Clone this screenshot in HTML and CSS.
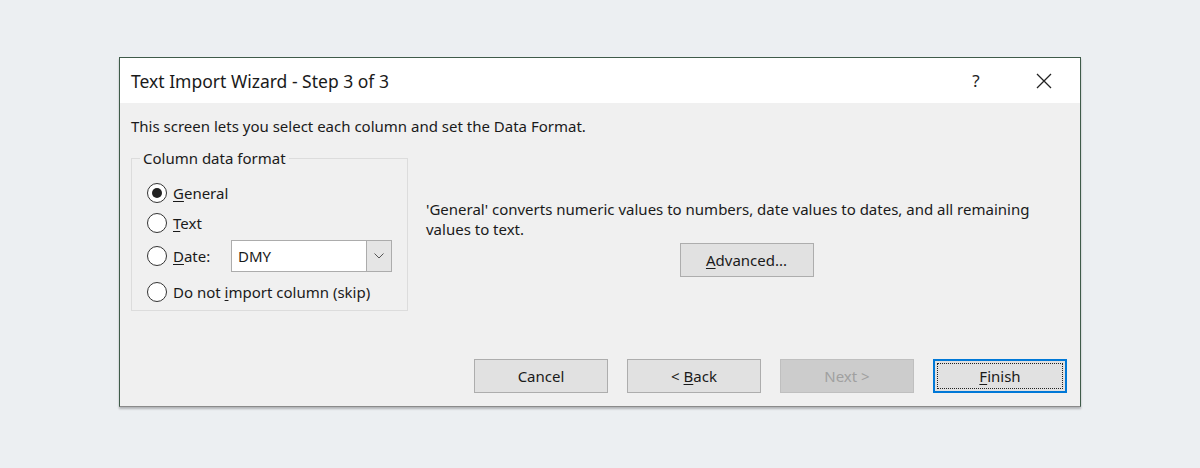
FILE: index.html
```html
<!DOCTYPE html>
<html>
<head>
<meta charset="utf-8">
<link rel="stylesheet" href="styles.css">
</head>
<body>
<div class="dialog">
  <div class="titlebar">
    <div class="title">Text Import Wizard - Step 3 of 3</div>
    <div class="tb-btn help">?</div>
    <div class="tb-btn close">
      <svg width="16" height="16" viewBox="0 0 16 16"><path d="M1 1 L15 15 M15 1 L1 15" stroke="#222" stroke-width="1.3" fill="none"/></svg>
    </div>
  </div>
  <div class="body">
    <div class="intro">This screen lets you select each column and set the Data Format.</div>
    <div class="main">
      <div class="group">
        <div class="legend">Column data format</div>
        <div class="radio-row first-row"><span class="radio checked"></span><span><u>G</u>eneral</span></div>
        <div class="radio-row"><span class="radio"></span><span><u>T</u>ext</span></div>
        <div class="radio-row date-row"><span class="radio"></span><span class="date-label"><u>D</u>ate:</span>
          <div class="select"><span class="select-val">DMY</span><span class="select-arrow"><svg width="10" height="6" viewBox="0 0 10 6"><path d="M0.5 0.5 L5 5 L9.5 0.5" stroke="#555" stroke-width="1" fill="none"/></svg></span></div>
        </div>
        <div class="radio-row last-row"><span class="radio"></span><span>Do not <u>i</u>mport column (skip)</span></div>
      </div>
      <div class="desc">
        <p>'General' converts numeric values to numbers, date values to dates, and all remaining values to text.</p>
        <div class="btn adv"><span><u>A</u>dvanced...</span></div>
      </div>
    </div>
    <div class="footer">
      <div class="btn"><span>Cancel</span></div>
      <div class="btn"><span>&lt; <u>B</u>ack</span></div>
      <div class="btn disabled"><span>Next &gt;</span></div>
      <div class="btn default"><span class="focus"><span><u>F</u>inish</span></span></div>
    </div>
  </div>
</div>
</body>
</html>
```
FILE: styles.css
```css
html, body {
  margin: 0;
  padding: 0;
}
body {
  background: #eceff2;
  font-family: "Noto Sans", "Open Sans", sans-serif;
  font-size: 15px;
  color: #1a1a1a;
  padding-top: 57px;
  height: 468px;
  box-sizing: border-box;
}
.dialog {
  width: 962px;
  height: 350px;
  margin: 0 auto;
  box-sizing: border-box;
  border: 1px solid #3f5b4a;
  border-bottom-color: #8a8a8a;
  background: #f0f0f0;
  box-shadow: 0 2px 2px rgba(0,0,0,0.25);
  display: flex;
  flex-direction: column;
}
.titlebar {
  height: 45px;
  background: #fff;
  display: flex;
  align-items: center;
  padding-left: 11px;
}
.title {
  flex: 1;
  font-size: 17.5px;
  color: #1a1a1a;
}
.tb-btn {
  width: 68px;
  height: 45px;
  display: flex;
  align-items: center;
  justify-content: center;
}
.help {
  font-size: 17px;
  color: #222;
}
.close {
  margin-right: 2px;
}
.body {
  flex: 1;
  padding: 13px 13px 13px 11px;
  display: flex;
  flex-direction: column;
}
.intro {
  line-height: 20px;
}
.main {
  display: flex;
  margin-top: 22px;
}
.group {
  width: 277px;
  height: 153px;
  box-sizing: border-box;
  border: 1px solid #dcdcdc;
  padding: 0 0 0 15px;
}
.legend {
  display: block;
  width: max-content;
  background: #f0f0f0;
  padding: 0 3px;
  margin-left: -7px;
  margin-top: -11px;
  line-height: 20px;
}
.radio-row {
  display: flex;
  align-items: center;
  height: 30px;
  gap: 6px;
}
.first-row {
  margin-top: 10px;
}
.radio {
  width: 20px;
  height: 20px;
  box-sizing: border-box;
  border: 1px solid #333;
  border-radius: 50%;
  background: #fff;
  position: relative;
  flex: none;
}
.radio.checked::after {
  content: "";
  position: absolute;
  left: 4px;
  top: 4px;
  width: 10px;
  height: 10px;
  border-radius: 50%;
  background: #222;
}
.date-row {
  height: 36px;
}
.last-row {
  height: 36px;
}
.date-label {
  width: 52px;
}
.select {
  width: 161px;
  height: 32px;
  box-sizing: border-box;
  border: 1px solid #acacac;
  background: #fff;
  display: flex;
}
.select-val {
  flex: 1;
  padding-left: 6px;
  display: flex;
  align-items: center;
}
.select-arrow {
  width: 24px;
  background: #e5e5e5;
  border-left: 1px solid #acacac;
  display: flex;
  align-items: center;
  justify-content: center;
}
.desc {
  flex: 1;
  margin-left: 18px;
  padding-top: 41px;
  display: flex;
  flex-direction: column;
  align-items: center;
}
.desc p {
  margin: 0;
  line-height: 20px;
  align-self: stretch;
}
.btn {
  width: 134px;
  height: 34px;
  box-sizing: border-box;
  background: #e1e1e1;
  border: 1px solid #adadad;
  display: flex;
  align-items: center;
  justify-content: center;
}
.adv {
  margin-top: 4px;
}
.footer {
  margin-top: auto;
  display: flex;
  justify-content: flex-end;
  gap: 19px;
}
.btn.disabled {
  background: #cccccc;
  border-color: #bfbfbf;
  color: #a0a0a0;
}
.btn.default {
  border: 2px solid #0078d7;
  padding: 2px;
}
.focus {
  flex: 1;
  align-self: stretch;
  border: 1px dotted #222;
  display: flex;
  align-items: center;
  justify-content: center;
}
u {
  text-underline-offset: 2px;
}
```
